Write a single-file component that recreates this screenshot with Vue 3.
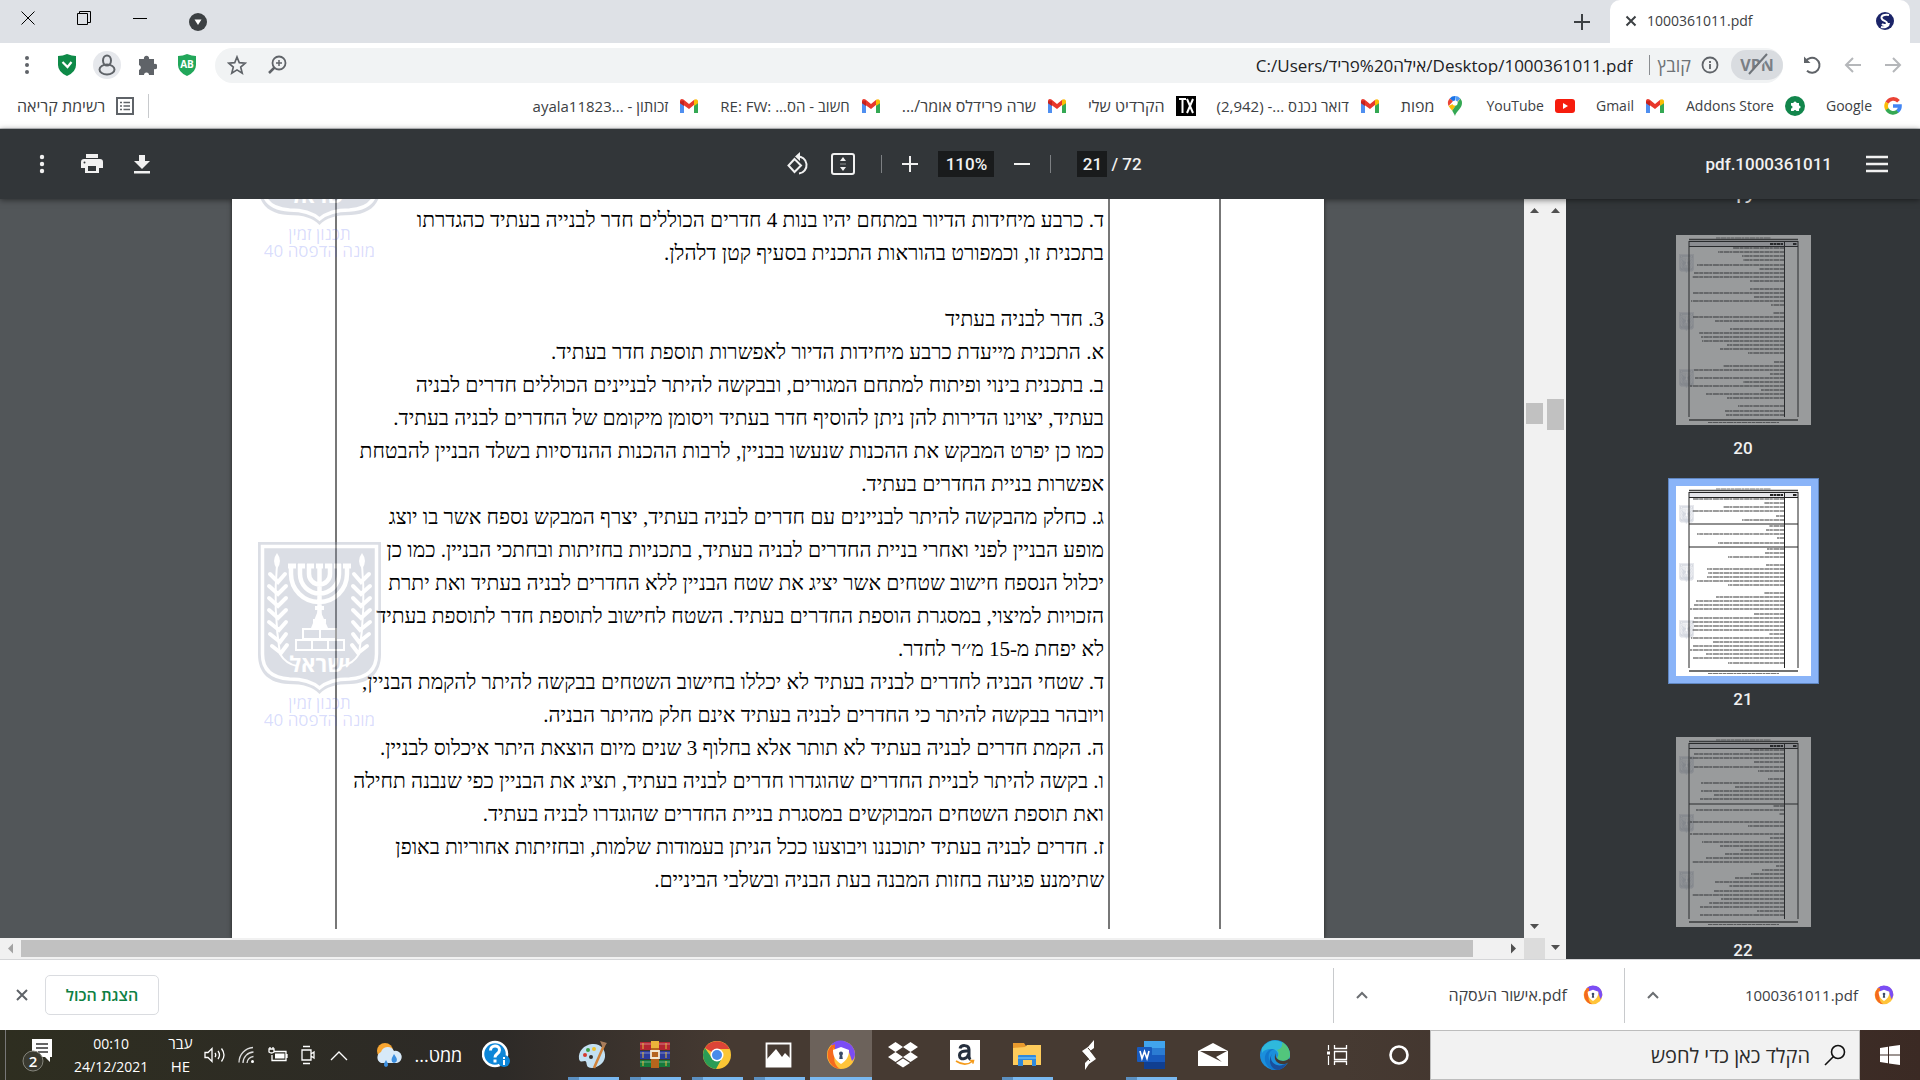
<script setup>
import { ref } from 'vue'

const search = ref('')
const page = ref('21')
const zoom = ref('110%')

const bookmarks = [
  { icon: 'google', text: 'Google' },
  { icon: 'addons', text: 'Addons Store' },
  { icon: 'gmail', text: 'Gmail' },
  { icon: 'youtube', text: 'YouTube' },
  { icon: 'maps', text: 'מפות', size: 'he' },
  { icon: 'gmail', text: 'דואר נכנס ...- \u200e(2,942)', size: 'mixed' },
  { icon: 'tx', text: 'הקרדיט שלי', size: 'he' },
  { icon: 'gmail', text: 'שרה פרידלס אומר/...', size: 'he' },
  { icon: 'gmail', text: 'חשוב - הס... RE: FW:\u200e', size: 'mixed' },
  { icon: 'gmail', text: 'זכותון - ayala11823...\u200e', size: 'mixed' }
]

const lines = [
  'ד. כרבע מיחידות הדיור במתחם יהיו בנות 4 חדרים הכוללים חדר לבנייה בעתיד כהגדרתו',
  'בתכנית זו, וכמפורט בהוראות התכנית בסעיף קטן דלהלן.',
  '',
  '3. חדר לבניה בעתיד',
  'א. התכנית מייעדת כרבע מיחידות הדיור לאפשרות תוספת חדר בעתיד.',
  'ב. בתכנית בינוי ופיתוח למתחם המגורים, ובבקשה להיתר לבניינים הכוללים חדרים לבניה',
  'בעתיד, יצוינו הדירות להן ניתן להוסיף חדר בעתיד ויסומן מיקומם של החדרים לבניה בעתיד.',
  'כמו כן יפרט המבקש את ההכנות שנעשו בבניין, לרבות ההכנות ההנדסיות בשלד הבניין להבטחת',
  'אפשרות בניית החדרים בעתיד.',
  'ג. כחלק מהבקשה להיתר לבניינים עם חדרים לבניה בעתיד, יצרף המבקש נספח אשר בו יוצג',
  'מופע הבניין לפני ואחרי בניית החדרים לבניה בעתיד, בתכניות בחזיתות ובחתכי הבניין. כמו כן',
  'יכלול הנספח חישוב שטחים אשר יציג את שטח הבניין ללא החדרים לבניה בעתיד ואת יתרת',
  'הזכויות למיצוי, במסגרת הוספת החדרים בעתיד. השטח לחישוב לתוספת חדר לתוספת בעתיד',
  'לא יפחת מ-15 מ׳׳ר לחדר.',
  'ד. שטחי הבניה לחדרים לבניה בעתיד לא יכללו בחישוב השטחים בבקשה להיתר להקמת הבניין,',
  'ויובהר בבקשה להיתר כי החדרים לבניה בעתיד אינם חלק מהיתר הבניה.',
  'ה. הקמת חדרים לבניה בעתיד לא תותר אלא בחלוף 3 שנים מיום הוצאת היתר איכלוס לבניין.',
  'ו. בקשה להיתר לבניית החדרים שהוגדרו חדרים לבניה בעתיד, תציג את הבניין כפי שנבנה תחילה',
  'ואת תוספת השטחים המבוקשים במסגרת בניית החדרים שהוגדרו לבניה בעתיד.',
  'ז. חדרים לבניה בעתיד יתוכננו ויבוצעו ככל הניתן בעמודות שלמות, ובחזיתות אחוריות באופן',
  'שתימנע פגיעה בחזות המבנה בעת הבניה ובשלבי הביניים.'
]

// rows: [y, width] of every text line on the small page
const thumbs = [
  {
    no: 20,
    rules: [],
    rows: [[13, 51], [17, 66], [21, 42], [25, 41], [30, 87], [34, 25], [38, 90], [42, 92], [46, 34], [54, 34], [58, 91], [62, 30], [66, 93], [70, 13], [78, 11], [82, 91], [86, 69], [94, 54], [98, 85], [102, 83], [106, 82], [110, 57], [114, 64], [118, 36], [127, 10], [131, 61], [135, 90], [139, 14], [143, 89], [147, 41], [151, 94], [155, 23], [159, 78], [163, 57], [171, 46], [176, 59], [180, 58]]
  },
  {
    no: 21,
    selected: true,
    rules: [38, 61],
    rows: [[13, 91], [17, 20], [21, 61], [25, 92], [30, 8], [34, 42], [40, 15], [44, 18], [48, 87], [52, 7], [57, 66], [63, 17], [67, 19], [71, 56], [79, 18], [83, 77], [87, 76], [91, 77], [95, 87], [99, 56], [107, 20], [111, 68], [115, 88], [119, 90], [123, 94], [128, 30], [132, 90], [136, 92], [140, 90], [144, 92], [148, 15], [152, 93], [156, 71], [160, 91], [164, 94], [168, 78], [172, 91], [177, 56]]
  },
  {
    no: 22,
    rules: [67],
    rows: [[13, 34], [17, 90], [21, 94], [25, 30], [30, 90], [34, 26], [42, 16], [46, 83], [50, 49], [54, 83], [58, 70], [62, 84], [69, 11], [73, 88], [77, 5], [85, 94], [89, 36], [97, 94], [101, 14], [105, 82], [109, 64], [113, 43], [117, 59], [121, 78], [125, 92], [129, 8], [133, 22], [137, 33], [141, 49], [145, 69], [149, 55], [154, 70], [158, 92], [162, 63], [166, 75], [170, 84], [174, 27], [178, 84]]
  }
]

const downloads = [
  { name: '1000361011.pdf' },
  { name: 'אישור העסקה.pdf', size: 'he' }
]

const apps = [
  { icon: 'cortana', name: 'Cortana' },
  { icon: 'taskview', name: 'Task view' },
  { icon: 'edge', name: 'Edge' },
  { icon: 'mail', name: 'Mail' },
  { icon: 'word', name: 'Word', open: true },
  { icon: 'bolt', name: 'S' },
  { icon: 'folder', name: 'Explorer', open: true },
  { icon: 'amazon', name: 'Amazon' },
  { icon: 'dropbox', name: 'Dropbox' },
  { icon: 'secure', name: 'Secure Browser', active: true },
  { icon: 'photos', name: 'Photos', open: true },
  { icon: 'chrome', name: 'Chrome', open: true },
  { icon: 'rar', name: 'WinRAR', open: true },
  { icon: 'paint', name: 'Paint', open: true }
]
</script>

<template>
  <svg class="sprite" aria-hidden="true">
    <symbol id="google" viewBox="0 0 20 20">
      <g fill="none" stroke-width="3.6">
        <path d="M15.5 5.2A7 7 0 0 0 4 6.8" stroke="#ea4335" />
        <path d="M4 6.6a7 7 0 0 0 0 6.8" stroke="#fbbc05" />
        <path d="M4 13.2a7 7 0 0 0 10.7 2" stroke="#34a853" />
        <path d="M14.5 15.4A7 7 0 0 0 17 10h-7" stroke="#4285f4" />
      </g>
    </symbol>
    <symbol id="addons" viewBox="0 0 20 20">
      <circle cx="10" cy="10" r="10" fill="#12864c" />
      <path d="M6 7h2.4a1.6 1.6 0 1 1 3.2 0H14v2.4a1.6 1.6 0 1 1 0 3.2V15h-2.6a1.5 1.5 0 0 0-2.8 0H6v-2.6a1.5 1.5 0 0 0 0-3z" fill="#fff" />
    </symbol>
    <symbol id="gmail" viewBox="0 0 20 20">
      <path d="M1 5v12h4V8z" fill="#4f8ff0" />
      <path d="M19 5v12h-4V8z" fill="#34a853" />
      <path d="M1 5.2C1 3 3 2.600 4.500 3.600L10 8l5.500-4.400v5L10 13 1 6.500z" fill="#e8372b" />
      <path d="M15 4c2-1.600 4-.6 4 1.500v1.700l-4 2.800z" fill="#fbbc05" />
      <path d="M1 5.500v1.700l4 2.800V5z" fill="#c5221f" />
    </symbol>
    <symbol id="youtube" viewBox="0 0 20 20">
      <rect x="0" y="3" width="20" height="14" rx="3" fill="#f61c0d" />
      <path d="M8 7l5 3-5 3z" fill="#fff" />
    </symbol>
    <symbol id="maps" viewBox="0 0 20 20">
      <path d="M10 0a7 7 0 0 0-5.300 2.400L10 7z" fill="#1a73e8" />
      <path d="M4.700 2.400A7 7 0 0 0 3.600 10L8 5.300z" fill="#ea4335" />
      <path d="M3.600 10C4.700 12 6 13 7.200 14.800L15.300 2.400 12 6z" fill="#fbbc05" />
      <path d="M7.200 14.800C8.700 17 9 18 10 20c1.200-5 7-7.400 7-13a7 7 0 0 0-1.700-4.600z" fill="#34a853" />
      <path d="M10 0a7 7 0 0 1 5.300 2.400L11 7z" fill="#4f9af5" />
      <circle cx="10" cy="7" r="2.600" fill="#fff" />
    </symbol>
    <symbol id="tx" viewBox="0 0 20 20">
      <path d="M0 0h20v20H0z" />
      <path d="M3 3h7M6.500 3v14M11 3l6 14M17 3l-6 14" stroke="#fff" stroke-width="2" />
    </symbol>
    <symbol id="secure" viewBox="0 0 30 30">
      <circle cx="15" cy="15" r="14" fill="#ffc43a" />
      <path d="M5 5a14 14 0 0 1 24 9c0 3-1 5-3 7L22 9z" fill="#7b4df5" />
      <path d="M6 5A14 14 0 0 0 14 29c-5-3-7-9-5-14z" fill="#f56a1e" />
      <path d="M5 6c4-3 12-3 18 3L9 10z" fill="#f56a1e" />
      <path d="M9 3c7-3 13 1 15 7L9 9z" fill="#7b4df5" />
      <path d="M15 7l8 3c0 6-2 10-8 14-6-4-8-8-8-14z" fill="#fff" />
      <circle cx="15" cy="13.500" r="2" fill="#3b4a66" />
      <path d="M14 14h2l.8 5h-3.600z" fill="#3b4a66" />
    </symbol>
    <symbol id="cortana" viewBox="0 0 30 30">
      <circle cx="15" cy="15" r="8.500" fill="none" stroke="#fff" stroke-width="2.600" />
    </symbol>
    <symbol id="taskview" viewBox="0 0 30 30">
      <g fill="none" stroke="#fff">
        <path d="M6.500 5v5M6.500 16v9" stroke-width="1.200" />
        <path d="M12.500 5v3.500h12V5M12.500 11.500h12v8h-12zM12.500 25v-3.500h12V25" stroke-width="1.300" />
      </g>
      <path d="M5 11.500h3v3H5z" fill="#fff" />
    </symbol>
    <symbol id="edge" viewBox="0 0 30 30">
      <circle cx="15" cy="15" r="15" fill="#1b8fdc" />
      <path d="M2 8A15 15 0 0 1 30 15c0 5-6 7-11 5-2-1-2-2-1-4 1-3-2-7-7-7-4 0-7 1-9 4z" fill="#2fb9dc" />
      <path d="M22 2a15 15 0 0 1 8 13c0 5-6 7-11 5-2-1-2-2-1-4 1-2 1-4-1-6 4-1 6-4 5-8z" fill="#52c67c" />
      <path d="M15 9c-6 1-8 7-5 13 3 5 9 8 16 3a15 15 0 0 1-13 5C5 27 2 17 8 11c2-2 5-2 7-2z" fill="#1277cc" />
      <path d="M13 13c-4 4-2 10 4 12 3 1 7 0 10-2-2 4-5 6-8 7-9 0-12-11-6-17z" fill="#1a4f9c" />
      <path d="M16 13c-1 3 0 6 4 7.500 4 1 7 0 9-2l1 2.500c-3 3-6 3.500-9 3-5-1-8-6-5-11z" fill="#453931" />
    </symbol>
    <symbol id="mail" viewBox="0 0 30 30">
      <path d="M0 11L15 3l15 8v15H0z" fill="#fff" />
      <path d="M2 11h27l-11 6 6 5z" fill="#453931" />
    </symbol>
    <symbol id="word" viewBox="0 0 30 30">
      <path d="M8 1h21v7H8z" fill="#41a5ee" />
      <path d="M8 8h21v7H8z" fill="#2b7cd3" />
      <path d="M8 15h21v7H8z" fill="#185abd" />
      <path d="M8 22h21v7H8z" fill="#103f91" />
      <rect x="1" y="7" width="15" height="15" rx="1" fill="#185abd" />
      <path d="M4 11l2 7.500 2.500-7 2.500 7 2-7.500" fill="none" stroke="#fff" stroke-width="1.600" />
    </symbol>
    <symbol id="bolt" viewBox="0 0 30 30">
      <path d="M20 0v8l-4 3 6 8-7 5-4 6V23l4-4-7-8 6-4z" fill="#fff" />
      <path d="M14 8l8 9M9 13l7 8" stroke="#453931" />
    </symbol>
    <symbol id="folder" viewBox="0 0 30 30">
      <path d="M1 3h11l2 3h14v19H1z" fill="#e89a2e" />
      <path d="M1 8l12-1 2-2h14v20H1z" fill="#fdcb5b" />
      <path d="M6 26V16q0-1 1-1h16q1 0 1 1v10h-4v-6h-9v6z" fill="#2f89dd" />
      <path d="M6 17h18v2H6z" fill="#5aaef0" />
    </symbol>
    <symbol id="amazon" viewBox="0 0 30 30">
      <path d="M0 0h30v30H0z" fill="#fff" />
      <path d="M10 8.500c1-4 9-4 9 1v7q0 2 1.500 3M18.500 11c-5-.5-9 .5-9 4.500 0 5 8 4 9-1.500" fill="none" stroke="#252f3e" stroke-width="3" />
      <path d="M6 21c6 4 12 4 17 0M20 20.500l3.500 0-.7 3.200" fill="none" stroke="#f59b1b" stroke-width="1.600" />
    </symbol>
    <symbol id="dropbox" viewBox="0 0 30 30">
      <path d="M7.500 2L15 7l-7.500 5L0 7zM22.500 2L30 7l-7.500 5L15 7zM7.500 12L15 17l-7.500 5L0 17zM22.500 12l7.500 5-7.500 5-7.500-5zM15 18.500l7 4.500-7 4.500L8 23z" fill="#fff" />
    </symbol>
    <symbol id="photos" viewBox="0 0 30 30">
      <path d="M2.500 3.500h24v23h-24z" fill="none" stroke="#fff" stroke-width="1.800" />
      <path d="M3 19l9-10 6 8 3-4 6 6v8H3z" fill="#fff" />
    </symbol>
    <symbol id="chrome" viewBox="0 0 30 30">
      <circle cx="15" cy="15" r="14" fill="#fbc634" />
      <path d="M15 15L2.900 8A14 14 0 0 1 27.500 9H15z" fill="#dc4437" />
      <path d="M2.900 8A14 14 0 0 0 14 29l6-11-5-3-5 3z" fill="#2a9c55" />
      <circle cx="15" cy="15" r="6.500" fill="#fff" />
      <circle cx="15" cy="15" r="5" fill="#4a8bea" />
    </symbol>
    <symbol id="rar" viewBox="0 0 30 30">
      <path d="M0 2h30v8H0z" fill="#b32632" />
      <path d="M0 11h30v8H0z" fill="#2b3a9c" />
      <path d="M0 20h30v7H0z" fill="#157a3c" />
      <path d="M0 4h30M0 13h30M0 22h30" stroke="#fff" stroke-opacity=".4" />
      <path d="M3 3v6M3 12v6M3 21v5M26 3v6M26 12v6M26 21v5" stroke="#e8b93c" />
      <path d="M11 1h8v27h-8z" fill="#b5651d" />
      <path d="M11 1h8v7h-8z" fill="#eab23a" />
      <path d="M11 11h8v7h-8z" fill="none" stroke="#f3e8d0" stroke-width="1.800" />
    </symbol>
    <symbol id="paint" viewBox="0 0 30 30">
      <path d="M14 4C6 5 0 11 1 19c1 4 4 2 6 2s1 4 3 6c6 3 16-2 17-10S22 3 14 4z" fill="#c3e0f2" />
      <circle cx="7" cy="15" r="2" fill="#d43a2f" />
      <circle cx="10" cy="10" r="2" fill="#3d9b46" />
      <circle cx="16" cy="9" r="2" fill="#eec12d" />
      <circle cx="13" cy="17" r="2" fill="#36302c" />
      <path d="M27 3L16 28" stroke="#d0823a" stroke-width="2.500" />
      <path d="M22 1l7 2-4 5z" fill="#a87d5c" />
    </symbol>
    <symbol id="emblem" viewBox="0 0 123 152">
      <path d="M0 0h123v112c0 20-12 29-30 30-16 0-25 3-31.500 10C55 145 46 142 30 142 12 141 0 132 0 112z" fill="#8a93ab" />
      <path d="M4.500 4.500h114V112c0 17-10 24-27 25-14 0-23 3-30 9-7-6-16-9-30-9-17-1-27-8-27-25z" fill="none" stroke="#fff" stroke-width="3.500" />
      <g fill="none" stroke="#fff">
        <path d="M33 22v10a28 28 0 0 0 56 0V22M42 22v10a19.500 19.500 0 0 0 39 0V22M51 22v10a10.500 10.500 0 0 0 21 0V22M61.500 22v62" stroke-width="4.500" />
        <path d="M30 24h8M40 24h7M49 24h7M58 24h7M67 24h7M76 24h7M85 24h8" stroke-width="5" />
        <path d="M57 66h9M55 79h13" stroke-width="4" />
        <path d="M19 22q-4 45 3 90 6 10 17 12M104 22q4 45-3 90-6 10-17 12" stroke-width="2" />
        <path d="M12 32l8 8 7-8M11 44l9 8 8-8M11 56l9 8 8-8M11 68l9 8 8-8M11 80l10 8 7-8M12 92l10 8 6-8M14 104l9 7 6-8M111 32l-8 8-7-8M112 44l-9 8-8-8M112 56l-9 8-8-8M112 68l-9 8-8-8M112 80l-10 8-7-8M111 92l-10 8-6-8M109 104l-9 7-6-8" stroke-width="4" stroke-linecap="round" />
        <path d="M45 87h33v10H45zM38 98h48v10H38zM62 87v10M54 98v10M70 98v10" stroke-width="2" />
      </g>
      <path d="M19 11q-6 8 0 16 6-8 0-16M104 11q-6 8 0 16 6-8 0-16M61 66l-8 20h17z" fill="#fff" />
    </symbol>
  </svg>

  <div class="screen" dir="rtl">
    <header class="tabs">
      <div class="tab">
        <svg width="20" height="20" viewBox="0 0 20 20">
          <circle cx="10" cy="10" r="9" fill="#1b2468" />
          <path d="M14 4c-5-1-9 1-7 4 1 2 5 2 5 4s-3 3-5 1M6 16c4 1 8-1 8-4" fill="none" stroke="#fff" stroke-width="2" />
        </svg>
        <span class="tab-name" dir="ltr">1000361011.pdf</span>
        <button class="plain" aria-label="Close tab">
          <svg width="12" height="12" viewBox="0 0 12 12"><path d="M1.500 1.500l9 9M10.500 1.500l-9 9" stroke="#3c4043" stroke-width="2" /></svg>
        </button>
      </div>
      <button class="plain new-tab" aria-label="New tab">
        <svg width="16" height="16" viewBox="0 0 16 16"><path d="M8 0v16M0 8h16" stroke="#3c4043" stroke-width="2" /></svg>
      </button>
      <div class="window-buttons">
        <button class="plain" aria-label="Search tabs">
          <svg width="18" height="26" viewBox="0 0 18 26"><circle cx="9" cy="17" r="9" fill="#3c4043" /><path d="M5.500 14.500h7L9 20z" fill="#fff" /></svg>
        </button>
        <button class="plain" aria-label="Minimize">
          <svg width="14" height="14" viewBox="0 0 14 14"><path d="M0 7.500h14" stroke="#000" /></svg>
        </button>
        <button class="plain" aria-label="Restore">
          <svg width="14" height="14" viewBox="0 0 14 14"><path d="M.5 2.500h10v11H.5zM2.500 2.500v-2h11v11h-3" fill="none" stroke="#000" /></svg>
        </button>
        <button class="plain" aria-label="Close">
          <svg width="14" height="14" viewBox="0 0 14 14"><path d="M.5.5l13 13M13.500.5l-13 13" stroke="#000" /></svg>
        </button>
      </div>
    </header>

    <nav class="address">
      <button class="plain" aria-label="Forward">
        <svg width="18" height="18" viewBox="0 0 18 18"><path d="M1 9h15M9 2l7 7-7 7" fill="none" stroke="#b5b7ba" stroke-width="2" /></svg>
      </button>
      <button class="plain" aria-label="Back">
        <svg width="18" height="18" viewBox="0 0 18 18"><path d="M17 9H2M9 2L2 9l7 7" fill="none" stroke="#b5b7ba" stroke-width="2" /></svg>
      </button>
      <button class="plain" aria-label="Reload">
        <svg width="20" height="20" viewBox="0 0 20 20"><path d="M3.500 6.500A7.500 7.500 0 1 1 5 15.800" fill="none" stroke="#5f6368" stroke-width="2" /><path d="M2 1.500V8h6.500z" fill="#5f6368" /></svg>
      </button>
      <div class="omnibox">
        <button class="vpn" aria-label="VPN off">
          <span>VPN</span>
          <svg class="strike" width="24" height="24" viewBox="0 0 24 24"><path d="M4 23L22 3" stroke="#d9dce0" stroke-width="3" /><path d="M3 21L21 1" stroke="#6f747a" stroke-width="2" /></svg>
        </button>
        <svg width="18" height="18" viewBox="0 0 18 18"><circle cx="9" cy="9" r="7.500" fill="none" stroke="#5f6368" stroke-width="1.800" /><path d="M9 8v5M9 5v2" stroke="#5f6368" stroke-width="1.800" /></svg>
        <label class="scheme" for="url">קובץ</label>
        <input id="url" class="url" dir="ltr" value="C:/Users/אילה%20פריד/Desktop/1000361011.pdf">
        <button class="plain" aria-label="Zoom">
          <svg width="20" height="20" viewBox="0 0 20 20"><circle cx="12" cy="8" r="6.500" fill="none" stroke="#5f6368" stroke-width="1.800" /><path d="M12 5v6M9 8h6" stroke="#5f6368" stroke-width="1.500" /><path d="M7.500 12.500L2 18" stroke="#5f6368" stroke-width="2.500" /></svg>
        </button>
        <button class="plain" aria-label="Bookmark">
          <svg width="20" height="20" viewBox="0 0 20 20"><path d="M10 2l2.300 5.700 6 .5-4.600 3.900 1.500 6L10 14.900l-5.200 3.200 1.500-6L1.700 8.200l6-.5z" fill="none" stroke="#5f6368" stroke-width="1.700" /></svg>
        </button>
      </div>
      <div class="extensions">
        <button class="plain" aria-label="Ad block">
          <svg width="20" height="22" viewBox="0 0 20 22"><path d="M10 0q5 2 9 2v9q0 7-9 11-9-4-9-11V2q5 0 9-2" fill="#22a75a" /><text x="10" y="14" text-anchor="middle" font-size="10" font-weight="700" fill="#fff">AB</text></svg>
        </button>
        <button class="plain" aria-label="Extensions">
          <svg width="20" height="22" viewBox="0 0 20 22"><path d="M2 5h5a2.600 2.600 0 1 1 5 0h5v5a2.700 2.700 0 1 1 0 5v6h-5a2.500 2.500 0 0 0-5 0H2v-5a2.600 2.600 0 0 0 0-5z" fill="#5f6368" /></svg>
        </button>
        <button class="plain profile" aria-label="Profile">
          <svg width="20" height="22" viewBox="0 0 20 22"><ellipse cx="10" cy="6.500" rx="4" ry="5" fill="none" stroke="#5f6368" stroke-width="2" /><ellipse cx="10" cy="15.500" rx="7.500" ry="5" fill="none" stroke="#5f6368" stroke-width="2" /></svg>
        </button>
        <button class="plain" aria-label="Security">
          <svg width="20" height="22" viewBox="0 0 20 22"><path d="M10 0q5 2 9 2v9q0 7-9 11-9-4-9-11V2q5 0 9-2" fill="#0e8a48" /><path d="M5.500 8l5 5 4-5" fill="none" stroke="#fff" stroke-width="2.200" /></svg>
        </button>
        <button class="plain" aria-label="Menu">
          <svg width="20" height="22" viewBox="0 0 20 22" fill="#5f6368"><circle cx="10" cy="4" r="2" /><circle cx="10" cy="11" r="2" /><circle cx="10" cy="18" r="2" /></svg>
        </button>
      </div>
    </nav>

    <nav class="bookmarks">
      <a v-for="(b, i) in bookmarks" :key="i" href="#" class="bookmark" :class="b.size">
        <svg width="20" height="20"><use :href="'#' + b.icon" /></svg>
        <span>{{ b.text }}</span>
      </a>
      <a href="#" class="bookmark reading he">
        <svg width="18" height="18" viewBox="0 0 18 18"><path d="M1 1h16v16H1z" fill="none" stroke="#5f6368" stroke-width="2" /><path d="M4 5.500h2M4 9h2M4 12.500h2M7.500 5.500H14M7.500 9H14M7.500 12.500H14" stroke="#5f6368" stroke-width="1.500" /></svg>
        <span>רשימת קריאה</span>
      </a>
    </nav>

    <header class="pdf-bar">
      <div class="side">
        <button class="plain" aria-label="Sidebar">
          <svg width="22" height="18" viewBox="0 0 22 18"><path d="M0 2h22M0 9h22M0 16h22" stroke="#f1f1f1" stroke-width="2.500" /></svg>
        </button>
        <h1 class="pdf-title" dir="ltr">pdf.1000361011</h1>
      </div>
      <div class="tools" dir="ltr">
        <button class="plain" aria-label="Rotate">
          <svg width="24" height="24" viewBox="0 0 24 24"><path d="M7.500 7L14 13.500 7.500 20 1.500 13.500zM10 4.500A8.500 8.500 0 1 1 12 21.500" fill="none" stroke="#f1f1f1" stroke-width="2" /><path d="M13 0v9L8 4.500z" fill="#f1f1f1" /></svg>
        </button>
        <button class="plain fit" aria-label="Fit to page">
          <svg width="24" height="24" viewBox="0 0 24 24"><rect x="1" y="2" width="22" height="20" rx="2" fill="none" stroke="#f1f1f1" stroke-width="2" /><path d="M12 5l3 4H9zM12 19l3-4H9z" fill="#f1f1f1" /><path d="M9 12h6" stroke="#8b8e90" /></svg>
        </button>
        <i class="rule"></i>
        <button class="plain" aria-label="Zoom in">
          <svg width="16" height="16" viewBox="0 0 16 16"><path d="M8 0v16M0 8h16" stroke="#f1f1f1" stroke-width="2" /></svg>
        </button>
        <input v-model="zoom" class="zoom-value" aria-label="Zoom level">
        <button class="plain" aria-label="Zoom out">
          <svg width="16" height="16" viewBox="0 0 16 16"><path d="M0 8h16" stroke="#f1f1f1" stroke-width="2" /></svg>
        </button>
        <i class="rule"></i>
        <div class="pages">
          <input v-model="page" class="page-value" aria-label="Page">
          <span>/ 72</span>
        </div>
      </div>
      <div class="side actions">
        <button class="plain" aria-label="Download">
          <svg width="18" height="20" viewBox="0 0 18 20"><path d="M6 1h6v6h5l-8 8-8-8h5zM1 17h16v2.500H1z" fill="#f1f1f1" /></svg>
        </button>
        <button class="plain" aria-label="Print">
          <svg width="22" height="20" viewBox="0 0 22 20"><path d="M5 0h12v4H5zM3 5h16q3 0 3 3v6h-4v5H4v-5H0V8q0-3 3-3z" fill="#f1f1f1" /><path d="M7 12h8v5H7z" fill="#323639" /><circle cx="3.500" cy="8.500" r="1" fill="#323639" /></svg>
        </button>
        <button class="plain" aria-label="More">
          <svg width="18" height="20" viewBox="0 0 18 20" fill="#f1f1f1"><circle cx="9" cy="3" r="2.200" /><circle cx="9" cy="10" r="2.200" /><circle cx="9" cy="17" r="2.200" /></svg>
        </button>
      </div>
    </header>

    <main class="viewer">
      <aside class="sidebar">
        <div class="thumb-list">
          <div class="thumb-no">19</div>
          <a v-for="t in thumbs" :key="t.no" href="#" class="thumb" :class="{ selected: t.selected }">
            <svg width="135" height="190" viewBox="0 0 135 190">
              <path fill="#fff" d="M0 0h135v190H0z" />
              <g opacity=".35">
                <use v-for="y in [19, 77, 134]" :key="y" href="#emblem" x="3" :y="y" width="15" height="19" />
              </g>
              <path d="M13 6.500h109v5H13z" fill="#e4e4e8" />
              <path d="M13 4.500h109M13 185h109" stroke="#444" stroke-width="1.500" />
              <path d="M13 6.500h109M13 11.500h109M13 6v176M108.500 6v176M122 6v176" stroke="#222" />
              <path v-for="r in t.rules" :key="r" :d="`M13 ${r}h109`" stroke="#222" />
              <path d="M94 9h13M117 9h4" stroke="#222" stroke-width="2" stroke-dasharray="3 .5" />
              <path d="M40 3h55M32 187.500h71" stroke="#777" stroke-dasharray="4 .5 6 .5 3 .5" />
              <path v-for="r in t.rows" :key="'t' + r[0]" :d="`M108 ${r[0]}h-${r[1]}`" stroke="#222" stroke-opacity=".45" stroke-width="2" stroke-dasharray="4 .5 6 .7 3 .4 5 .6" />
            </svg>
            <span class="thumb-no">{{ t.no }}</span>
          </a>
        </div>
      </aside>

      <div class="scroll side-scroll">
        <svg class="arrow" viewBox="0 0 21 21"><path d="M6 14h9l-4.500-5z" /></svg>
        <div class="track"><div class="handle"></div></div>
        <svg class="arrow" viewBox="0 0 21 21"><path d="M6 7h9l-4.500 5z" /></svg>
      </div>

      <section class="content">
        <div class="content-row">
          <div class="scroll">
            <svg class="arrow" viewBox="0 0 21 21"><path d="M6 14h9l-4.500-5z" /></svg>
            <div class="track"><div class="handle"></div></div>
            <svg class="arrow" viewBox="0 0 21 21"><path d="M6 7h9l-4.500 5z" /></svg>
          </div>
          <div class="canvas">
            <article class="sheet">
              <div class="margin"></div>
              <div class="number"></div>
              <div class="text">
                <p v-for="(l, i) in lines" :key="i">{{ l }}</p>
              </div>
              <div class="stamps">
                <figure v-for="n in 2" :key="n" class="stamp">
                  <svg width="123" height="152" viewBox="0 0 123 152">
                    <use href="#emblem" width="123" height="152" />
                    <text x="62" y="130" text-anchor="middle" fill="#fff" font-size="22" font-weight="700">ישראל</text>
                  </svg>
                  <figcaption>תכנון זמין<br>מונה הדפסה 40</figcaption>
                </figure>
              </div>
            </article>
          </div>
        </div>
        <div class="scroll-x" dir="ltr">
          <svg class="arrow faded" viewBox="0 0 21 21"><path d="M13 5.500v10L8 10.500z" /></svg>
          <div class="handle-x"></div>
          <i></i>
          <svg class="arrow" viewBox="0 0 21 21"><path d="M8 5.500v10l5-5z" /></svg>
          <div class="corner"></div>
        </div>
      </section>
    </main>

    <footer class="downloads">
      <div v-for="d in downloads" :key="d.name" class="download" :class="d.size">
        <svg width="20" height="20"><use href="#secure" /></svg>
        <a href="#" dir="ltr">{{ d.name }}</a>
        <button class="plain" aria-label="Options">
          <svg width="12" height="8" viewBox="0 0 12 8"><path d="M1 7l5-5 5 5" fill="none" stroke="#6b6e72" stroke-width="2" /></svg>
        </button>
      </div>
      <button class="show-all">הצגת הכול</button>
      <button class="plain" aria-label="Close downloads">
        <svg width="12" height="12" viewBox="0 0 12 12"><path d="M1 1l10 10M11 1L1 11" stroke="#5f6368" stroke-width="2" /></svg>
      </button>
    </footer>

    <footer class="taskbar">
      <button class="plain start" aria-label="Start">
        <svg width="20" height="20" viewBox="0 0 20 20"><path d="M0 3l8-1.200V9.500H0zM9 1.600L20 0v9.500H9zM0 10.500h8v7.700L0 17zM9 10.500h11V20L9 18.400z" fill="#fff" /></svg>
      </button>
      <div class="search">
        <svg width="22" height="22" viewBox="0 0 22 22"><circle cx="14" cy="8" r="6.500" fill="none" stroke="#111" stroke-width="1.600" /><path d="M9.500 12.500L1 21" stroke="#111" stroke-width="1.600" /></svg>
        <input v-model="search" placeholder="הקלד כאן כדי לחפש" aria-label="חיפוש">
      </div>
      <button v-for="a in apps" :key="a.icon" class="plain app" :class="{ open: a.open, active: a.active }" :aria-label="a.name">
        <svg width="30" height="30"><use :href="'#' + a.icon" /></svg>
      </button>
      <div class="tray">
        <svg width="28" height="30" viewBox="0 0 28 30"><circle cx="13" cy="14" r="12" fill="#0d86d8" stroke="#fff" stroke-width="2.500" /><path d="M8.500 10.500c0-6 9-6 9-.5 0 4-4.500 3.500-4.500 7.500M13 19.500v3" fill="none" stroke="#fff" stroke-width="3" /><circle cx="22" cy="21" r="6" fill="#0d86d8" /><path d="M22 20v5M22 17v2" stroke="#fff" stroke-width="2" /></svg>
        <span class="weather-text">ממט...</span>
        <svg width="26" height="26" viewBox="0 0 26 26"><circle cx="9" cy="9" r="8" fill="#f7a531" /><path d="M5 21a6 6 0 0 1 0-11 7 7 0 0 1 13-1 6 6 0 0 1 3 12z" fill="#d7e9f8" /><path d="M18 12q6 8 0 9-5-1 0-9M10 18q4 6 0 7-4-1 0-7" fill="#3b8fe0" /></svg>
        <svg class="up" width="18" height="12" viewBox="0 0 18 12"><path d="M1 11l8-8 8 8" fill="none" stroke="#fff" stroke-width="1.300" /></svg>
        <svg width="18" height="20" viewBox="0 0 18 20"><path d="M2 5h9v10H2zM11 9l3-2v6l-3-2M3 1.500h7M3 18.500h7" fill="none" stroke="#fff" stroke-width="1.300" /></svg>
        <svg width="20" height="18" viewBox="0 0 20 18"><path d="M6 5.500h12v9H4V9M19 8v4M1 3h5v3q-2.500 2-5 0zM2 1v2M5 1v2" fill="none" stroke="#fff" stroke-width="1.300" /><path d="M7 7.500h9.500v5H7z" fill="#fff" /></svg>
        <svg width="18" height="18" viewBox="0 0 18 18"><path d="M1 16.500A15 15 0 0 1 15 1.500M5 17A11 11 0 0 1 15.500 6M9 17a7 7 0 0 1 6.500-6.500" fill="none" stroke="#ddd" stroke-width="1.300" /><circle cx="14.500" cy="15.500" r="1.500" fill="#fff" /></svg>
        <svg width="22" height="18" viewBox="0 0 22 18"><path d="M1 6.500h3l4-4v13l-4-4H1zM11 7q1.500 2 0 4M14 5q3 4 0 8M17.500 2.500q5 6.500 0 13" fill="none" stroke="#fff" stroke-width="1.300" /></svg>
        <div class="lang">עבר<br>HE</div>
        <time class="clock">00:10<br>24/12/2021</time>
        <svg class="note" width="32" height="36" viewBox="0 0 32 36"><path d="M10 2h20v18h-2v5l-5-5H10z" fill="#fff" /><path d="M14 7h12M14 11h12M16 15h10" stroke="#333" stroke-width="1.400" /><circle cx="11" cy="24" r="10" fill="#3a3a30" stroke="#85857c" /><text x="11" y="30" text-anchor="middle" font-size="15" font-weight="600" fill="#fff">2</text></svg>
      </div>
    </footer>
  </div>
</template>

<style>
body {
  margin: 0;
  background: #323639;
}
</style>

<style scoped>
.sprite {
  display: none;
}

.screen {
  display: flex;
  flex-direction: column;
  height: 100vh;
  overflow: hidden;
  font-family: "Open Sans", "Liberation Sans", sans-serif;
  font-size: 14px;
  color: #3c4043;
}

svg {
  flex: none;
  display: block;
}

input,
button {
  font-family: inherit;
  color: inherit;
}

a {
  color: inherit;
  text-decoration: none;
}

.plain {
  padding: 0;
  border: none;
  background: none;
  display: flex;
  align-items: center;
  justify-content: center;
}

.mixed {
  font-size: 15px;
}

.he {
  font-size: 16px;
}

/* tabs */
.tabs {
  display: flex;
  align-items: center;
  height: 43px;
  padding-right: 10px;
  background: #dee1e6;
}

.tab {
  display: flex;
  align-items: center;
  gap: 10px;
  box-sizing: border-box;
  width: 300px;
  height: 43px;
  padding: 0 15px 2px;
  background: #fff;
  border-radius: 10px 10px 0 0;
}

.tab-name {
  flex: 1;
}

.new-tab {
  margin-right: 20px;
}

.window-buttons {
  display: flex;
  align-items: center;
  gap: 42px;
  height: 36px;
  margin: 0 auto auto 21px;
}

/* address row */
.address {
  display: flex;
  align-items: center;
  gap: 22px;
  box-sizing: border-box;
  height: 46px;
  padding: 0 18px 2px 17px;
  background: #fff;
}

.omnibox {
  flex: 1;
  display: flex;
  align-items: center;
  height: 35px;
  margin-right: -3px;
  border-radius: 18px;
  background: #f1f3f4;
}

.omnibox .plain {
  margin-left: 20px;
}

.omnibox .plain:last-child {
  margin-left: 12px;
}

.vpn {
  position: relative;
  width: 52px;
  height: 30px;
  margin-left: 12px;
  padding: 0;
  border: none;
  border-radius: 15px;
  background: #d9dce0;
  color: #7a7f85;
  font-size: 16px;
  font-weight: 700;
}

.strike {
  position: absolute;
  top: 3px;
  left: 15px;
}

.scheme {
  margin: 0 10px 0 8px;
  font-size: 18px;
  color: #6f7377;
}

.url {
  flex: 1;
  min-width: 0;
  height: 20px;
  padding: 0 16px 0 0;
  border: none;
  border-right: 1px solid #8a8d91;
  outline: none;
  background: none;
  font-size: 17px;
  color: #202124;
  text-align: right;
}

.extensions {
  display: flex;
  gap: 20px;
  margin-right: -4px;
}

.profile {
  width: 28px;
  height: 28px;
  margin: -3px -4px;
  border-radius: 50%;
  background: #e6e8ec;
}

/* bookmarks */
.bookmarks {
  display: flex;
  align-items: center;
  gap: 21px;
  box-sizing: border-box;
  height: 40px;
  padding: 0 17px 6px;
  border-bottom: 1px solid #c8cacd;
  background: #fff;
}

.bookmark {
  display: flex;
  align-items: center;
  gap: 11px;
  line-height: 24px;
  white-space: nowrap;
}

.reading {
  margin-right: auto;
  padding-right: 14px;
  border-right: 1px solid #c8cacd;
}

/* pdf toolbar */
.pdf-bar {
  position: relative;
  display: flex;
  align-items: center;
  height: 70px;
  padding: 0 32px 0 33px;
  background: #323639;
  box-shadow: 0 1px 6px rgba(0, 0, 0, 0.5);
  color: #f1f1f1;
  font-family: Roboto, sans-serif;
}

.side {
  flex: 1;
  display: flex;
  align-items: center;
  gap: 34px;
}

.actions {
  justify-content: flex-end;
  gap: 30px;
}

.pdf-title {
  margin: 0;
  font-size: 17px;
  font-weight: 500;
}

.tools {
  display: flex;
  align-items: center;
  gap: 20px;
  padding-left: 8px;
}

.fit {
  margin-right: 6px;
}

.rule {
  width: 1px;
  height: 18px;
  background: #7d8083;
}

.zoom-value,
.page-value {
  box-sizing: border-box;
  width: 56px;
  height: 26px;
  padding: 0;
  border: none;
  background: #191b1c;
  color: #f1f1f1;
  font-size: 17px;
  font-weight: 500;
  text-align: center;
}

.page-value {
  width: 30px;
}

.pages {
  display: flex;
  align-items: center;
  gap: 4px;
  margin-left: 6px;
  font-size: 17px;
  font-weight: 500;
}

/* viewer */
.viewer {
  flex: 1;
  display: flex;
  min-height: 0;
  background: #525659;
}

.sidebar {
  width: 354px;
  overflow: hidden;
  background: #323639;
}

.thumb-list {
  display: flex;
  flex-direction: column;
  align-items: center;
  gap: 26px;
  margin-top: -14px;
}

.thumb {
  display: flex;
  flex-direction: column;
  align-items: center;
  gap: 11px;
}

.thumb svg {
  opacity: 0.5;
}

.selected svg {
  opacity: 1;
  box-shadow: 0 0 0 7px #8ab4f8, 0 0 0 8px #5f86c0;
}

.thumb-no {
  font-family: Roboto, sans-serif;
  font-size: 17px;
  font-weight: 500;
  line-height: 24px;
  color: #f1f1f1;
}

.scroll {
  display: flex;
  flex-direction: column;
  width: 21px;
  background: #f1f1f1;
}

.arrow {
  width: 21px;
  height: 21px;
  fill: #505050;
}

.faded {
  fill: #a3a3a3;
}

.track {
  flex: 1;
  display: flex;
  flex-direction: column;
  padding: 0 2px;
}

.track::before {
  content: "";
  flex: 27;
}

.track::after {
  content: "";
  flex: 73;
}

.handle {
  height: 21px;
  background: #c1c1c1;
}

.side-scroll .handle {
  height: 31px;
}

.side-scroll .track::before {
  flex: 26;
}

.side-scroll .track::after {
  flex: 74;
}

.content {
  flex: 1;
  display: flex;
  flex-direction: column;
  min-width: 0;
}

.content-row {
  flex: 1;
  display: flex;
  min-height: 0;
}

.canvas {
  flex: 1;
  display: flex;
  overflow: hidden;
  padding: 0 200px 0 232px;
}

.sheet {
  position: relative;
  flex: 1;
  display: flex;
  padding-bottom: 9px;
  background: #fff;
  box-shadow: 0 0 4px #222;
}

.margin {
  width: 103px;
  border-left: 2px solid #777;
}

.number {
  width: 109px;
  border-left: 2px solid #777;
}

.text {
  flex: 1;
  margin-left: 103px;
  padding: 5px 4px 0 0;
  border-left: 2px solid #777;
  font-family: "Liberation Serif", serif;
  font-size: 21px;
  line-height: 33px;
  color: #000;
  white-space: nowrap;
}

.text p {
  height: 33px;
  margin: 0;
}

/* watermark printed over the sheet */
.stamps {
  position: absolute;
  left: 21px;
  bottom: 210px;
  display: flex;
  flex-direction: column;
  gap: 283px;
}

.stamp {
  display: flex;
  flex-direction: column;
  align-items: center;
  width: 133px;
  margin: 0;
}

.stamp svg {
  opacity: 0.3;
}

.stamp figcaption {
  font-size: 17px;
  line-height: 17px;
  text-align: center;
  white-space: nowrap;
  color: rgba(60, 80, 240, 0.2);
}

.scroll-x {
  display: flex;
  height: 21px;
  background: #f1f1f1;
}

.handle-x {
  flex: 1452;
  margin: 2px 0;
  background: #c1c1c1;
}

.scroll-x i {
  flex: 30;
}

.corner {
  width: 21px;
  background: #dcdcdc;
}

/* downloads */
.downloads {
  display: flex;
  align-items: center;
  height: 70px;
  padding: 0 26px 0 16px;
  border-top: 1px solid #d5d6d8;
  background: #fff;
  font-size: 15px;
}

.download {
  display: flex;
  align-items: center;
  gap: 16px;
  box-sizing: border-box;
  width: 270px;
  height: 55px;
  padding-left: 22px;
  border-left: 1px solid #c8cacd;
}

.download + .download {
  width: 291px;
  padding-right: 21px;
}

.download button {
  margin-right: auto;
}

.show-all {
  width: 114px;
  height: 40px;
  margin: 0 auto 0 17px;
  border: 1px solid #dadce0;
  border-radius: 5px;
  background: #fff;
  color: #0e8043;
  font-size: 16px;
  font-weight: 600;
}

/* taskbar */
.taskbar {
  display: flex;
  height: 50px;
  background: linear-gradient(to right, #2e2e20, #2d2a27 26%, #463a32 38%, #463a32 70%, #3b2a24);
  color: #fff;
}

.start {
  width: 60px;
}

.search {
  flex: 0 1 430px;
  display: flex;
  align-items: center;
  gap: 14px;
  box-sizing: border-box;
  padding: 0 13px;
  border: 1px solid #bdbdbd;
  background: #f2f2f2;
}

.search input {
  flex: 1;
  min-width: 0;
  padding: 0;
  border: none;
  outline: none;
  background: none;
  font-size: 20px;
  color: #222;
}

.search input::placeholder {
  color: #2b2b2b;
  opacity: 1;
}

.app {
  flex: 0 1 62px;
}

.open {
  background: linear-gradient(to right, #5b8fc0 11px, #79b8f0 11px) center bottom / 51px 3px no-repeat;
}

.active {
  background: linear-gradient(#79b8f0, #79b8f0) center bottom / 100% 3px no-repeat #6c625b;
}

.tray {
  flex: 1;
  display: flex;
  align-items: center;
  justify-content: flex-end;
  gap: 12px;
  margin-left: 5px;
  padding-left: 16px;
  border-left: 1px solid #777;
}

.weather-text {
  margin-right: 8px;
  font-size: 18px;
}

.up {
  margin-right: 16px;
}

.lang,
.clock {
  font-size: 14px;
  line-height: 23px;
  text-align: center;
}

.lang {
  font-size: 15px;
}

.clock {
  margin: 0 8px;
}
</style>
